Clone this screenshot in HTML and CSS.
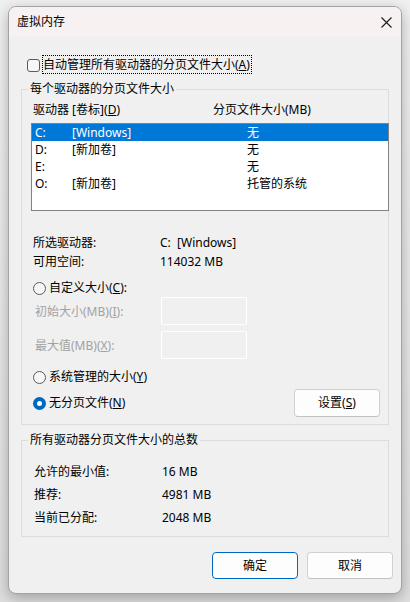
FILE: index.html
```html
<!DOCTYPE html>
<html lang="zh-CN">
<head>
<meta charset="utf-8">
<title>虚拟内存</title>
<link rel="stylesheet" href="styles.css">
</head>
<body>
<div class="window">
  <div class="titlebar">
    <span class="title">虚拟内存</span>
    <svg class="close" width="11" height="11" viewBox="0 0 11 11"><path d="M0.5 0.5 L10.5 10.5 M10.5 0.5 L0.5 10.5" stroke="#1a1a1a" stroke-width="1.1" fill="none"/></svg>
  </div>
  <div class="content">
    <div class="auto-row">
      <span class="checkbox"></span>
      <span class="focus">自动管理所有驱动器的分页文件大小(<u>A</u>)</span>
    </div>

    <fieldset class="group g1">
      <legend>每个驱动器的分页文件大小</legend>
      <div class="col-head"><span class="ch1">驱动器 [卷标](<u>D</u>)</span><span>分页文件大小(MB)</span></div>
      <div class="listbox">
        <div class="lrow sel"><span class="c-drive">C:</span><span class="c-label">[Windows]</span><span>无</span></div>
        <div class="lrow"><span class="c-drive">D:</span><span class="c-label">[新加卷]</span><span>无</span></div>
        <div class="lrow"><span class="c-drive">E:</span><span class="c-label"></span><span>无</span></div>
        <div class="lrow"><span class="c-drive">O:</span><span class="c-label">[新加卷]</span><span>托管的系统</span></div>
      </div>
      <div class="info">
        <div class="irow"><span class="ilabel">所选驱动器:</span><span>C:&nbsp;&nbsp;[Windows]</span></div>
        <div class="irow"><span class="ilabel">可用空间:</span><span>114032 MB</span></div>
      </div>
      <div class="radio-row r1"><span class="radio"></span><span>自定义大小(<u>C</u>):</span></div>
      <div class="input-row ir1"><span class="dlabel">初始大小(MB)(<u>I</u>):</span><span class="tbox"></span></div>
      <div class="input-row ir2"><span class="dlabel">最大值(MB)(<u>X</u>):</span><span class="tbox"></span></div>
      <div class="radio-row r2"><span class="radio"></span><span>系统管理的大小(<u>Y</u>)</span></div>
      <div class="last-row">
        <div class="radio-row"><span class="radio checked"></span><span>无分页文件(<u>N</u>)</span></div>
        <button class="btn set">设置(<u>S</u>)</button>
      </div>
    </fieldset>

    <fieldset class="group g2">
      <legend>所有驱动器分页文件大小的总数</legend>
      <div class="trow first"><span class="tlabel">允许的最小值:</span><span>16 MB</span></div>
      <div class="trow"><span class="tlabel">推荐:</span><span>4981 MB</span></div>
      <div class="trow"><span class="tlabel">当前已分配:</span><span>2048 MB</span></div>
    </fieldset>

    <div class="buttons">
      <button class="btn ok">确定</button>
      <button class="btn">取消</button>
    </div>
  </div>
</div>
</body>
</html>
```

FILE: styles.css
```css
html, body {
  margin: 0;
  padding: 0;
}
body {
  width: 410px;
  height: 602px;
  overflow: hidden;
  background: linear-gradient(#f0f0f0, #dedede);
  font-family: "Noto Sans", "Noto Sans CJK SC", sans-serif;
  font-size: 12px;
  color: #000;
}
u {
  text-decoration: underline;
  text-underline-offset: 1px;
}
.window {
  box-sizing: border-box;
  margin: 6px 0 0 8px;
  width: 394px;
  height: 588px;
  border: 1px solid #a3a3a3;
  border-radius: 8px;
  overflow: hidden;
  background: #f0f0f0;
  box-shadow: 0 4px 14px rgba(0, 0, 0, 0.28);
}
.titlebar {
  height: 29px;
  background: #f8f1f1;
  display: flex;
  align-items: center;
  justify-content: space-between;
  padding: 0 9px 0 8px;
}
.title {
  line-height: 16px;
  margin-top: 1px;
}
.close {
  display: block;
  margin-top: 1px;
}
.content {
  display: flex;
  flex-direction: column;
}
.auto-row {
  display: flex;
  align-items: center;
  margin-top: 19px;
  height: 19px;
}
.checkbox {
  box-sizing: border-box;
  width: 13px;
  height: 13px;
  border: 1px solid #5a5a5a;
  border-radius: 3px;
  background: #f6f6f6;
  margin-left: 18px;
  margin-right: 2px;
  margin-top: 1px;
}
.focus {
  line-height: 17px;
  border: 1px dotted #000;
  padding: 0 1px 0 0;
}
.group {
  box-sizing: border-box;
  margin: 7px 0 0 12px;
  width: 368px;
  padding: 0;
  border: 1px solid #dcdcdc;
  min-width: 0;
}
.group legend {
  margin-left: 6px;
  padding: 0 2px;
  line-height: 16px;
}
.col-head {
  display: flex;
  margin-top: 5px;
  padding-left: 11px;
  line-height: 16px;
}
.ch1 {
  width: 180px;
}
.listbox {
  box-sizing: border-box;
  margin: 5px 0 0 9px;
  width: 358px;
  height: 88px;
  border: 1px solid #828282;
  background: #fff;
}
.lrow {
  display: flex;
  height: 17px;
  line-height: 17px;
  padding-left: 3px;
}
.lrow.sel {
  background: #0078d7;
  color: #fff;
}
.c-drive {
  width: 37px;
}
.c-label {
  width: 175px;
}
.info {
  margin-top: 22px;
}
.irow {
  display: flex;
  height: 19px;
  line-height: 19px;
  padding-left: 11px;
}
.ilabel {
  width: 127px;
}
.radio-row {
  display: flex;
  align-items: center;
  height: 18px;
  line-height: 18px;
  padding-left: 11px;
}
.radio-row.r1 {
  margin-top: 8px;
}
.radio-row.r2 {
  margin-top: 9px;
}
.radio {
  box-sizing: border-box;
  width: 13px;
  height: 13px;
  border: 1px solid #5a5a5a;
  border-radius: 50%;
  background: #f6f6f6;
  margin-right: 3px;
}
.radio.checked {
  border: 4px solid #0067c0;
  background: #fff;
}
.input-row {
  display: flex;
  align-items: center;
  height: 28px;
  padding-left: 13px;
}
.input-row.ir2 {
  margin-top: 6px;
}
.dlabel {
  width: 126px;
  color: #a2a2a2;
  padding-top: 2px;
  line-height: 16px;
}
.tbox {
  box-sizing: border-box;
  width: 86px;
  height: 28px;
  border: 1px solid #ffffff;
  border-radius: 1px;
  background: #f0f0f0;
}
.last-row {
  display: flex;
  align-items: center;
  justify-content: space-between;
  margin-top: 3px;
  height: 28px;
  padding-right: 8px;
  margin-bottom: 7px;
}
.last-row .radio-row {
  padding-left: 11px;
}
.btn {
  box-sizing: border-box;
  width: 86px;
  height: 28px;
  border: 1px solid #d0d0d0;
  border-bottom-color: #c2c2c2;
  border-radius: 4px;
  background: #fdfdfd;
  font-family: inherit;
  font-size: 12px;
  color: #000;
  padding: 0;
  line-height: 16px;
}
.btn.ok {
  border: 1px solid #0067c0;
}
.g2 {
  padding-bottom: 7px;
}
.trow {
  display: flex;
  height: 23px;
  line-height: 23px;
  padding-left: 12px;
}
.trow.first {
  margin-top: 12px;
}
.tlabel {
  width: 128px;
}
.buttons {
  display: flex;
  justify-content: flex-end;
  gap: 9px;
  margin-top: 15px;
  padding-right: 8px;
}
.buttons .btn {
  height: 27px;
}
```
